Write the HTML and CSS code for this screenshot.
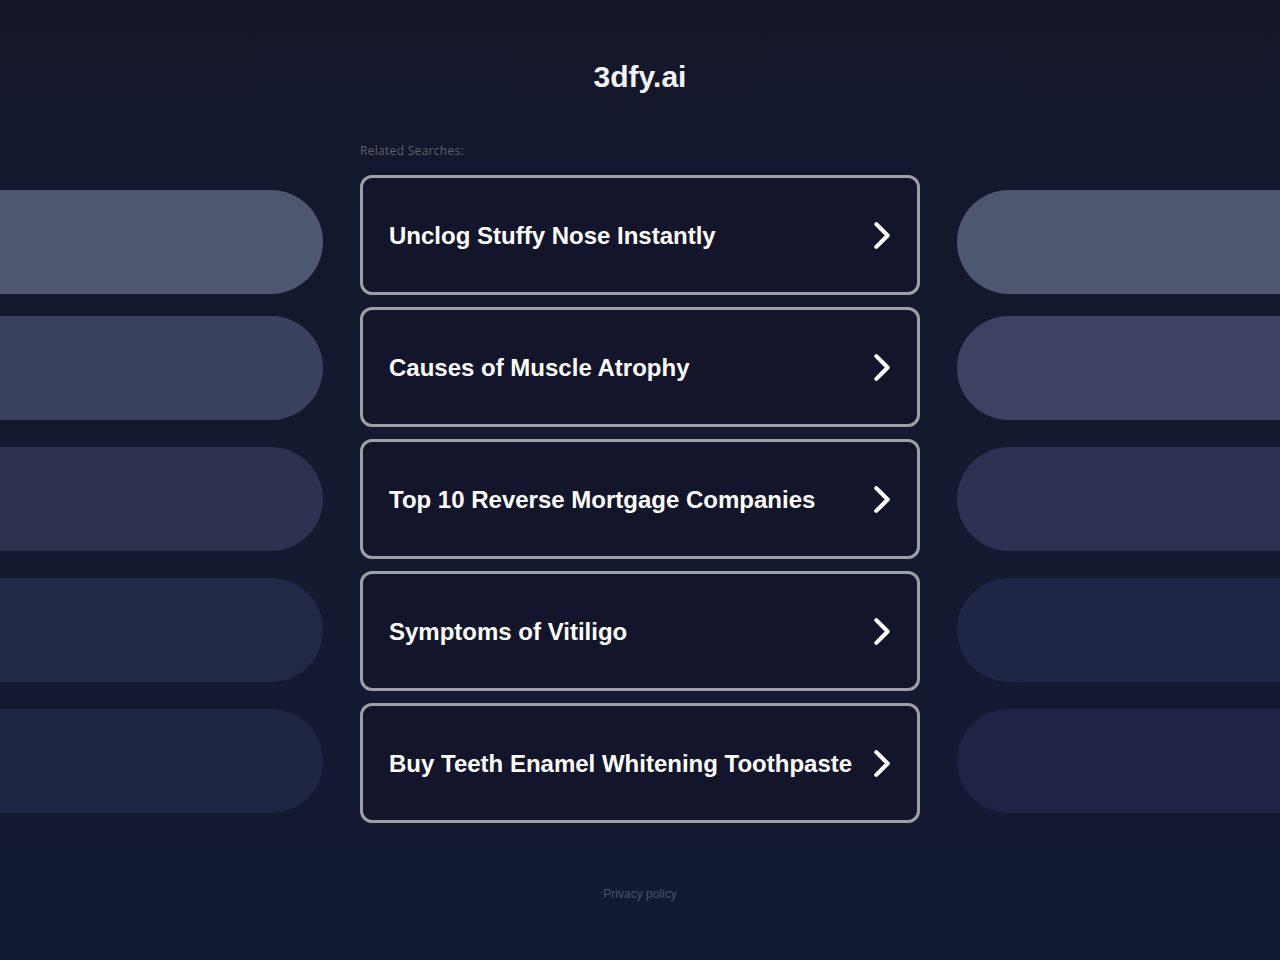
FILE: index.html
```html
<!DOCTYPE html>
<html lang="en">
<head>
<meta charset="utf-8">
<title>3dfy.ai</title>
<link rel="stylesheet" href="styles.css">
</head>
<body class="page">
  <header class="brand">3dfy.ai</header>

  <main class="layout">
    <div class="deco deco-left" aria-hidden="true">
      <span class="pill pill-1"></span>
      <span class="pill pill-2"></span>
      <span class="pill pill-3"></span>
      <span class="pill pill-4"></span>
      <span class="pill pill-5"></span>
    </div>

    <section class="related">
      <p class="related-label">Related Searches:</p>
      <ul class="search-list">
        <li><a class="search-item" href="#"><span>Unclog Stuffy Nose Instantly</span><svg class="chev" viewBox="0 0 20 28"><path d="M4 3 L15 14 L4 25"/></svg></a></li>
        <li><a class="search-item" href="#"><span>Causes of Muscle Atrophy</span><svg class="chev" viewBox="0 0 20 28"><path d="M4 3 L15 14 L4 25"/></svg></a></li>
        <li><a class="search-item" href="#"><span>Top 10 Reverse Mortgage Companies</span><svg class="chev" viewBox="0 0 20 28"><path d="M4 3 L15 14 L4 25"/></svg></a></li>
        <li><a class="search-item" href="#"><span>Symptoms of Vitiligo</span><svg class="chev" viewBox="0 0 20 28"><path d="M4 3 L15 14 L4 25"/></svg></a></li>
        <li><a class="search-item" href="#"><span>Buy Teeth Enamel Whitening Toothpaste</span><svg class="chev" viewBox="0 0 20 28"><path d="M4 3 L15 14 L4 25"/></svg></a></li>
      </ul>
    </section>

    <div class="deco deco-right" aria-hidden="true">
      <span class="pill pill-1"></span>
      <span class="pill pill-2"></span>
      <span class="pill pill-3"></span>
      <span class="pill pill-4"></span>
      <span class="pill pill-5"></span>
    </div>
  </main>

  <footer class="footer"><a href="#">Privacy policy</a></footer>
</body>
</html>
```

FILE: styles.css
```css
html, body {
  margin: 0;
  padding: 0;
}

.page {
  min-height: 960px;
  background: linear-gradient(180deg, #14172a 0%, #141a30 60%, #121a33 100%);
  font-family: "Liberation Sans", Arial, sans-serif;
  color: #ffffff;
}

.brand {
  padding-top: 60px;
  height: 34px;
  line-height: 34px;
  text-align: center;
  font-size: 30px;
  font-weight: bold;
  color: #f2f3f6;
}

.layout {
  display: grid;
  grid-template-columns: 323px 560px 323px;
  column-gap: 37px;
  margin-top: 48px;
}

/* side decoration */
.deco {
  display: flex;
  flex-direction: column;
  padding-top: 48px;
}

.pill {
  display: block;
  height: 104px;
}

.deco-left .pill { border-radius: 0 52px 52px 0; }
.deco-right .pill { border-radius: 52px 0 0 52px; }

.pill-2 { margin-top: 22px; }
.pill-3 { margin-top: 27px; }
.pill-4 { margin-top: 27px; }
.pill-5 { margin-top: 27px; }

.deco-left .pill-1 { background: #4f566f; }
.deco-left .pill-2 { background: #3b4260; }
.deco-left .pill-3 { background: #2c3250; }
.deco-left .pill-4 { background: #222946; }
.deco-left .pill-5 { background: #1f2644; }

.deco-right .pill-1 { background: #4f5670; }
.deco-right .pill-2 { background: #3d4263; }
.deco-right .pill-3 { background: #2d3253; }
.deco-right .pill-4 { background: #1f2545; }
.deco-right .pill-5 { background: #1f2447; }

/* related searches */
.related-label {
  margin: 0 0 16px;
  padding-top: 1px;
  height: 16px;
  line-height: 16px;
  font-family: "Open Sans", "Liberation Sans", sans-serif;
  font-size: 12px;
  letter-spacing: 0.3px;
  color: #5c6073;
}

.search-list {
  list-style: none;
  margin: 0;
  padding: 0;
  display: flex;
  flex-direction: column;
  gap: 12px;
}

.search-item {
  box-sizing: border-box;
  height: 120px;
  display: flex;
  align-items: center;
  justify-content: space-between;
  padding: 1px 24px 0 26px;
  border: 3px solid #9c9fa5;
  border-radius: 12px;
  background: #13162b;
  color: #ffffff;
  text-decoration: none;
  font-size: 24px;
  font-weight: bold;
}

.chev {
  width: 21px;
  height: 29px;
  fill: none;
  stroke: #ffffff;
  stroke-width: 4;
  stroke-linecap: round;
  stroke-linejoin: round;
}

.footer {
  margin-top: 63px;
  text-align: center;
  line-height: 16px;
  font-size: 12px;
}

.footer a {
  color: #4c5168;
  text-decoration: none;
}
```
